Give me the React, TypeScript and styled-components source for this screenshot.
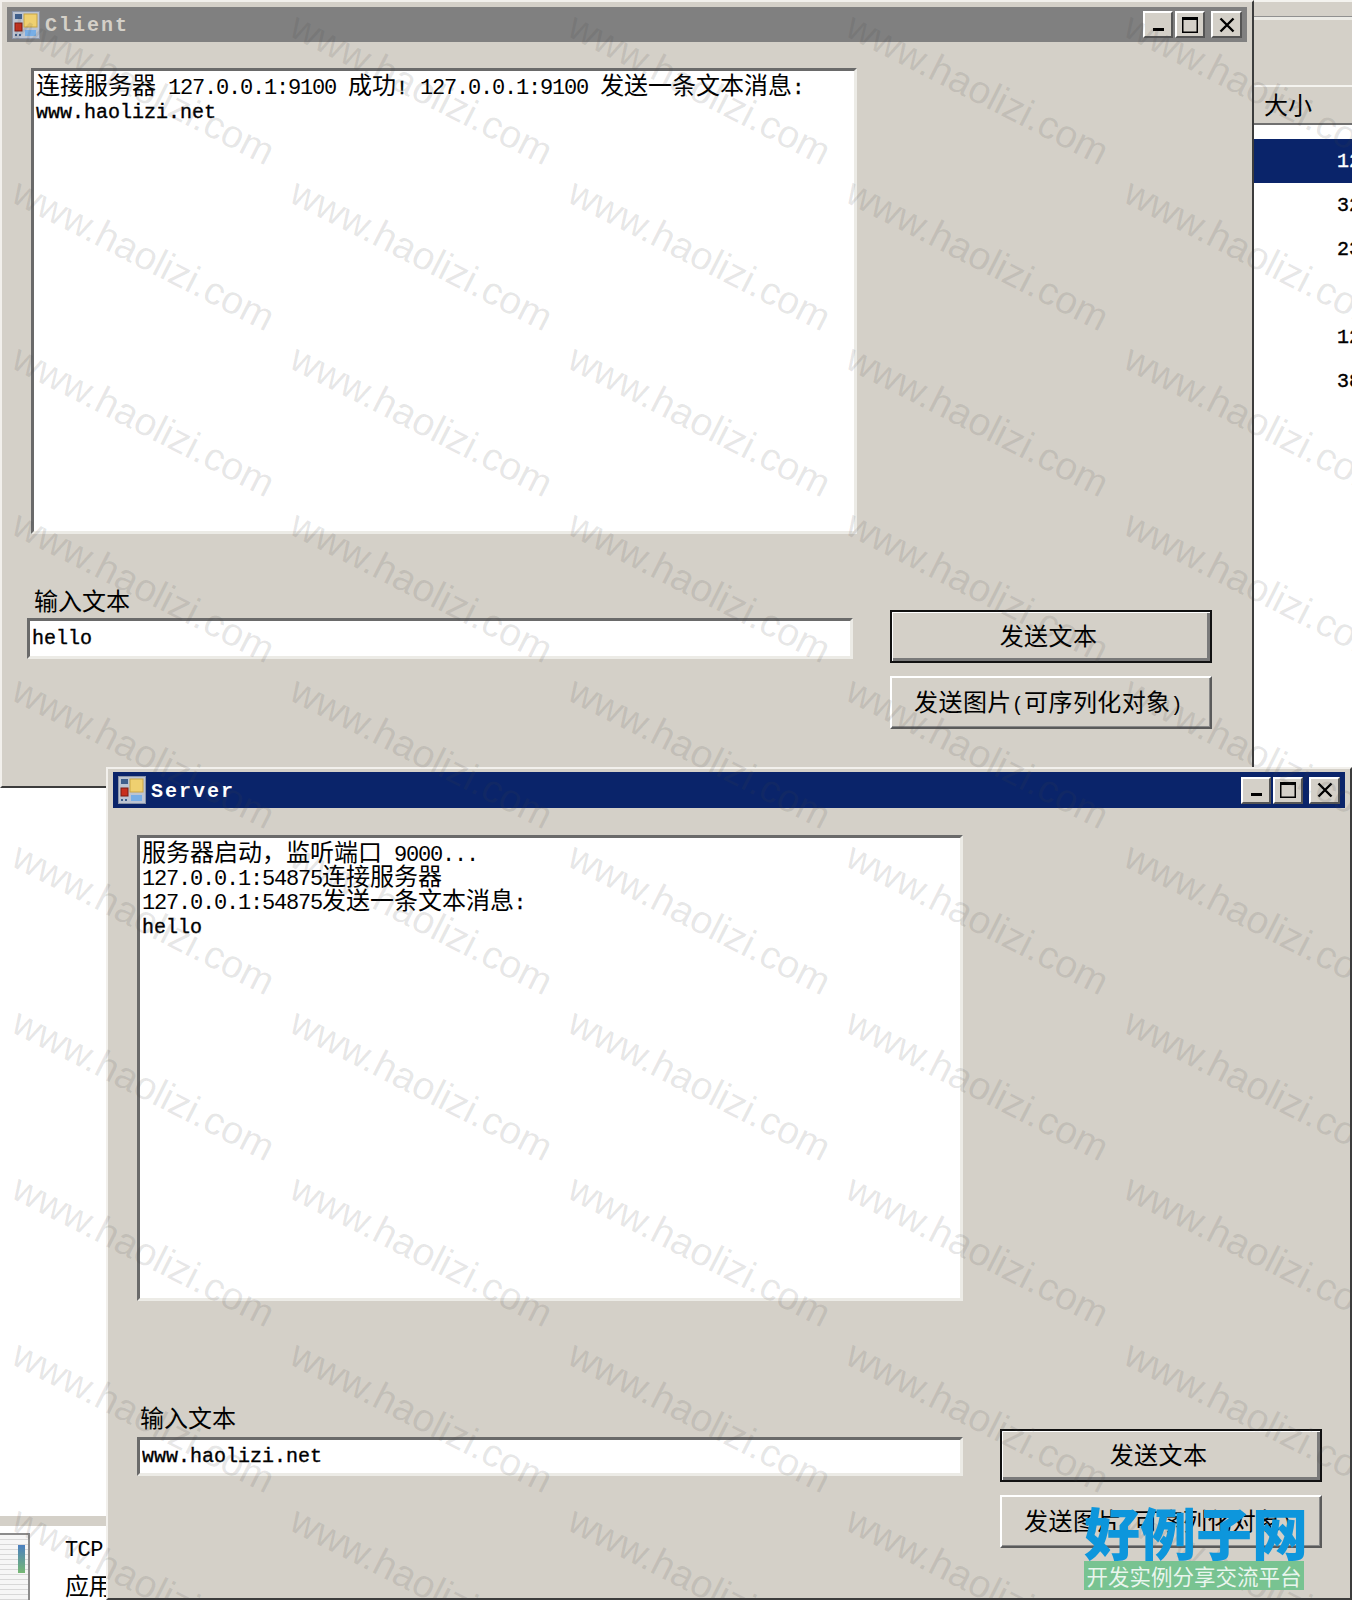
import React from 'react';
import styled, { createGlobalStyle } from 'styled-components';

const FACE = '#d4d0c8';
const NAVY = '#0a246a';
const LATIN = '"Liberation Mono", "DejaVu Sans Mono", monospace';
const HAN = '"Noto Sans CJK SC", "Noto Sans", sans-serif';

const GlobalStyle = createGlobalStyle`
  html, body {
    margin: 0;
    padding: 0;
    background: #fff;
  }
  #root {
    height: 1600px;
  }
`;

const Desktop = styled.div`
  position: relative;
  width: 1352px;
  height: 1600px;
  overflow: hidden;
  background: #fff;
  font-family: ${LATIN};
  font-size: 20px;
  line-height: 24px;
  color: #000;
`;

// Windows sit on a free desktop, so these are placed by coordinates
const Window = styled.section<{ $left: number; $top: number; $width: number; $height: number; $padTop: number }>`
  position: absolute;
  left: ${(p) => p.$left}px;
  top: ${(p) => p.$top}px;
  width: ${(p) => p.$width}px;
  height: ${(p) => p.$height}px;
  box-sizing: border-box;
  padding: ${(p) => p.$padTop}px 5px 0;
  background: ${FACE};
  border: 2px solid;
  border-color: #f2f0ec #3c3c3c #3c3c3c #f2f0ec;
`;

const TitleBar = styled.header<{ $active?: boolean; $height: number }>`
  display: flex;
  align-items: center;
  height: ${(p) => p.$height}px;
  padding: 0 5px;
  background: ${(p) => (p.$active ? NAVY : '#808080')};
  color: ${(p) => (p.$active ? '#fff' : FACE)};
`;

const TitleText = styled.span`
  margin: 3px 0 0 5px;
  font-weight: 700;
  letter-spacing: 2px;
  flex: 1;
`;

const TitleControls = styled.div`
  display: flex;
  gap: 2px;
`;

const TitleButton = styled.div<{ $close?: boolean }>`
  width: ${(p) => (p.$close ? 31 : 30)}px;
  height: 27px;
  box-sizing: border-box;
  margin-left: ${(p) => (p.$close ? 4 : 0)}px;
  display: flex;
  align-items: center;
  justify-content: center;
  background: ${FACE};
  border: 2px solid;
  border-color: #fff #555 #555 #fff;
`;

const WindowBody = styled.div<{ $top: number }>`
  display: flex;
  flex-direction: column;
  padding: ${(p) => p.$top}px 0 0 24px;
`;

const LogBox = styled.div`
  width: 826px;
  height: 466px;
  box-sizing: border-box;
  padding: 6px 2px 0;
  background: #fff;
  border: 3px solid;
  border-color: #6a6a6a #ecebe6 #ecebe6 #6a6a6a;
  white-space: pre;
`;

const Han = styled.span`
  font-family: ${HAN};
  font-size: 24px;
  line-height: 0;
`;

// SimSun digits stand taller than the mono face, same 12px advance
const Digits = styled.span`
  font-size: 22px;
  letter-spacing: -1.2px;
  line-height: 0;
`;

const Word = styled.span`
  -webkit-text-stroke: 0.35px #000;
`;

const BottomRow = styled.div<{ $gap: number; $indent: number }>`
  display: flex;
  gap: 37px;
  margin-top: ${(p) => p.$gap}px;
  margin-left: ${(p) => p.$indent}px;
`;

const InputColumn = styled.div`
  display: flex;
  flex-direction: column;
`;

const FieldLabel = styled.label<{ $indent: number; $gap: number }>`
  display: block;
  height: 24px;
  line-height: 32px;
  margin-left: ${(p) => p.$indent}px;
  margin-bottom: ${(p) => p.$gap}px;
`;

const TextInput = styled.input<{ $height: number }>`
  display: block;
  width: 826px;
  height: ${(p) => p.$height}px;
  box-sizing: border-box;
  padding: 0 2px;
  margin: 0;
  outline: none;
  background: #fff;
  border: 3px solid;
  border-color: #6a6a6a #ecebe6 #ecebe6 #6a6a6a;
  border-radius: 0;
  font-family: ${LATIN};
  font-size: 20px;
  -webkit-text-stroke: 0.35px #000;
  color: #000;
`;

const ButtonColumn = styled.div<{ $offset: number }>`
  display: flex;
  flex-direction: column;
  gap: 13px;
  margin-top: ${(p) => p.$offset}px;
`;

const PushButton = styled.button<{ $default?: boolean }>`
  width: 322px;
  height: 53px;
  box-sizing: border-box;
  padding: 7px 5px 0 0;
  background: ${FACE};
  color: #000;
  font-family: ${LATIN};
  font-size: 20px;
  line-height: 24px;
  letter-spacing: 0.4px;
  border-radius: 0;
  border: 2px solid;
  border-color: ${(p) => (p.$default ? '#111' : '#fff #5a5a5a #5a5a5a #fff')};
  box-shadow: ${(p) => (p.$default ? 'inset 1px 1px 0 #fff, inset -3px -3px 0 #7a7a7a' : 'inset -1px -1px 0 #8a8a8a')};
`;

// Windows partly hidden behind Client and Server
const ListWindow = styled.aside`
  position: absolute;
  left: 1254px;
  top: 0;
  width: 98px;
  height: 770px;
  overflow: hidden;
  display: flex;
  flex-direction: column;
  background: #fff;
`;

const ListChrome = styled.div`
  height: 85px;
  box-sizing: border-box;
  background: ${FACE};
  border-top: 2px solid #f4f3ef;
  flex-shrink: 0;
`;

const ChromeRule = styled.div`
  margin-top: 14px;
  height: 3px;
  background: #ecebe6;
  border-top: 1px solid #909090;
`;

const ListHeader = styled.div`
  height: 40px;
  flex-shrink: 0;
  box-sizing: border-box;
  padding: 10px 0 0 10px;
  background: ${FACE};
  border-top: 2px solid #f4f3ef;
  border-bottom: 2px solid #707070;
`;

const ListRows = styled.div`
  display: flex;
  flex-direction: column;
  padding-top: 14px;
`;

const ListRow = styled.div<{ $selected?: boolean }>`
  height: 44px;
  line-height: 45px;
  padding-left: 83px;
  white-space: nowrap;
  -webkit-text-stroke: 0.35px currentColor;
  background: ${(p) => (p.$selected ? NAVY : 'transparent')};
  color: ${(p) => (p.$selected ? '#fff' : '#000')};
`;

const ExplorerWindow = styled.aside`
  position: absolute;
  left: 0;
  top: 788px;
  width: 106px;
  height: 812px;
  overflow: hidden;
  display: flex;
  flex-direction: column;
  background: #fff;
`;

const ExplorerSpacer = styled.div`
  height: 728px;
  flex-shrink: 0;
`;

const ExplorerRule = styled.div`
  height: 10px;
  flex-shrink: 0;
  background: ${FACE};
`;

const ExplorerItem = styled.div`
  display: flex;
  gap: 35px;
  padding-top: 7px;
`;

const FileThumb = styled.div`
  width: 30px;
  height: 90px;
  flex-shrink: 0;
  box-sizing: border-box;
  border: 2px solid #8c8c8c;
  border-left: none;
  background: repeating-linear-gradient(#f6f6f6 0 4px, #d8d8d8 4px 5px);
  padding: 10px 3px 0 0;
  display: flex;
  justify-content: flex-end;
`;

const ThumbBar = styled.div`
  width: 7px;
  height: 28px;
  background: linear-gradient(#4a7fc0, #76b874);
`;

const FileLabels = styled.div`
  display: flex;
  flex-direction: column;
  gap: 15px;
  padding-top: 6px;
  white-space: nowrap;
`;

const FileName = styled.div`
  height: 24px;
  font-size: 22px;
  letter-spacing: -0.6px;
`;

const WatermarkLayer = styled.div`
  position: absolute;
  inset: 0;
  padding: 5px 0 0 5px;
  display: grid;
  grid-template-columns: repeat(5, 278px);
  grid-auto-rows: 166px;
  overflow: hidden;
  pointer-events: none;
`;

const Watermark = styled.div`
  display: flex;
  align-items: center;
  justify-content: center;
  white-space: nowrap;
  font-family: "Liberation Sans", Arial, sans-serif;
  font-size: 39px;
  line-height: 1;
  color: rgba(70, 70, 70, 0.13);
  transform: rotate(27deg);
`;

const Logo = styled.div`
  position: absolute;
  left: 1084px;
  top: 1501px;
  width: 220px;
  display: flex;
  flex-direction: column;
  pointer-events: none;
`;

const LogoMark = styled.div`
  height: 60px;
  font-family: ${HAN};
  font-size: 56px;
  line-height: 60px;
  font-weight: 900;
  white-space: nowrap;
  color: #0d96dc;
`;

const LogoSlogan = styled.div`
  height: 29px;
  background: #78c391;
  color: rgba(255, 255, 255, 0.85);
  font-family: ${HAN};
  font-size: 21.5px;
  line-height: 29px;
  text-align: center;
  white-space: nowrap;
  overflow: hidden;
`;

const AppIcon: React.FC = () => (
  <svg width="28" height="28" viewBox="0 0 28 28" style={{ flexShrink: 0 }}>
    <rect x="0.5" y="0.5" width="27" height="27" fill="#bcc4d2" stroke="#8a94a8" />
    <rect x="3" y="3" width="7" height="5" fill="#3f5f8c" />
    <rect x="12" y="3" width="13" height="13" fill="#efd070" stroke="#c9a544" />
    <rect x="3" y="12" width="7" height="8" fill="#c8301f" stroke="#7a1a10" />
    <rect x="13" y="19" width="11" height="6" fill="#78aee6" />
    <rect x="3" y="23" width="2" height="2" fill="#3f5f8c" />
    <rect x="7" y="23" width="2" height="2" fill="#3f5f8c" />
  </svg>
);

const MinimizeGlyph: React.FC = () => (
  <svg width="16" height="16" viewBox="0 0 16 16">
    <rect x="3" y="11" width="11" height="3" fill="#000" />
  </svg>
);

const MaximizeGlyph: React.FC = () => (
  <svg width="20" height="20" viewBox="0 0 20 20">
    <rect x="2" y="2" width="16" height="3" fill="#000" />
    <rect x="2.75" y="2.75" width="14.5" height="14.5" fill="none" stroke="#000" strokeWidth="1.5" />
  </svg>
);

const CloseGlyph: React.FC = () => (
  <svg width="18" height="18" viewBox="0 0 18 18">
    <path d="M2.5 2.5 L15.5 15.5 M15.5 2.5 L2.5 15.5" stroke="#000" strokeWidth="2.4" fill="none" />
  </svg>
);

// SimSun mixes half-width latin with full-width han, so each kind of run gets its own size
const RUNS = /([\u3000-\u9fff\uff00-\uffef]+|\d[\d.:]*)/;

const Mixed: React.FC<{ text: string; boldWords?: boolean }> = ({ text, boldWords }) => (
  <>
    {text.split(RUNS).map((part, i) => {
      if (i % 2 === 0) return boldWords && part.trim() ? <Word key={i}>{part}</Word> : part;
      return /^\d/.test(part) ? <Digits key={i}>{part}</Digits> : <Han key={i}>{part}</Han>;
    })}
  </>
);

type PanelProps = {
  title: string;
  active?: boolean;
  left: number;
  top: number;
  width: number;
  height: number;
  padTop: number;
  barHeight: number;
  log: string[];
  value: string;
  bodyTop: number;
  rowGap: number;
  rowIndent: number;
  labelIndent: number;
  labelGap: number;
  inputHeight: number;
  buttonOffset: number;
};

const AppWindow: React.FC<PanelProps> = (p) => (
  <Window $left={p.left} $top={p.top} $width={p.width} $height={p.height} $padTop={p.padTop}>
    <TitleBar $active={p.active} $height={p.barHeight}>
      <AppIcon />
      <TitleText>{p.title}</TitleText>
      <TitleControls>
        <TitleButton><MinimizeGlyph /></TitleButton>
        <TitleButton><MaximizeGlyph /></TitleButton>
        <TitleButton $close><CloseGlyph /></TitleButton>
      </TitleControls>
    </TitleBar>
    <WindowBody $top={p.bodyTop}>
      <LogBox>
        {p.log.map((line) => (
          <div key={line}><Mixed text={line} boldWords /></div>
        ))}
      </LogBox>
      <BottomRow $gap={p.rowGap} $indent={p.rowIndent}>
        <InputColumn>
          <FieldLabel $indent={p.labelIndent} $gap={p.labelGap}><Han>输入文本</Han></FieldLabel>
          <TextInput $height={p.inputHeight} readOnly value={p.value} />
        </InputColumn>
        <ButtonColumn $offset={p.buttonOffset}>
          <PushButton $default><Han>发送文本</Han></PushButton>
          <PushButton><Mixed text="发送图片(可序列化对象)" /></PushButton>
        </ButtonColumn>
      </BottomRow>
    </WindowBody>
  </Window>
);

const listSizes = ['12', '32', '23', '', '12', '38'];
const watermarks = Array.from({ length: 50 }, (_, i) => i);

const App: React.FC = () => (
  <>
    <GlobalStyle />
    <Desktop>
      <ListWindow>
        <ListChrome><ChromeRule /></ListChrome>
        <ListHeader><Han>大小</Han></ListHeader>
        <ListRows>
          {listSizes.map((size, i) => (
            <ListRow key={i} $selected={i === 0}>{size}</ListRow>
          ))}
        </ListRows>
      </ListWindow>

      <ExplorerWindow>
        <ExplorerSpacer />
        <ExplorerRule />
        <ExplorerItem>
          <FileThumb><ThumbBar /></FileThumb>
          <FileLabels>
            <FileName>TCP</FileName>
            <FileName><Han>应用</Han></FileName>
          </FileLabels>
        </ExplorerItem>
      </ExplorerWindow>

      <AppWindow
        title="Client"
        left={0}
        top={0}
        width={1254}
        height={788}
        padTop={5}
        barHeight={35}
        log={['连接服务器 127.0.0.1:9100 成功! 127.0.0.1:9100 发送一条文本消息:', 'www.haolizi.net']}
        value="hello"
        bodyTop={26}
        rowGap={55}
        rowIndent={-4}
        labelIndent={7}
        labelGap={5}
        inputHeight={41}
        buttonOffset={21}
      />

      <AppWindow
        title="Server"
        active
        left={106}
        top={767}
        width={1246}
        height={833}
        padTop={3}
        barHeight={36}
        log={['服务器启动\uff0c监听端口 9000...', '127.0.0.1:54875连接服务器', '127.0.0.1:54875发送一条文本消息:', 'hello']}
        value="www.haolizi.net"
        bodyTop={27}
        rowGap={105}
        rowIndent={0}
        labelIndent={3}
        labelGap={7}
        inputHeight={39}
        buttonOffset={23}
      />

      <WatermarkLayer>
        {watermarks.map((i) => (
          <Watermark key={i}>www.haolizi.com</Watermark>
        ))}
      </WatermarkLayer>

      <Logo>
        <LogoMark>好例子网</LogoMark>
        <LogoSlogan>开发实例分享交流平台</LogoSlogan>
      </Logo>
    </Desktop>
  </>
);

export default App;
